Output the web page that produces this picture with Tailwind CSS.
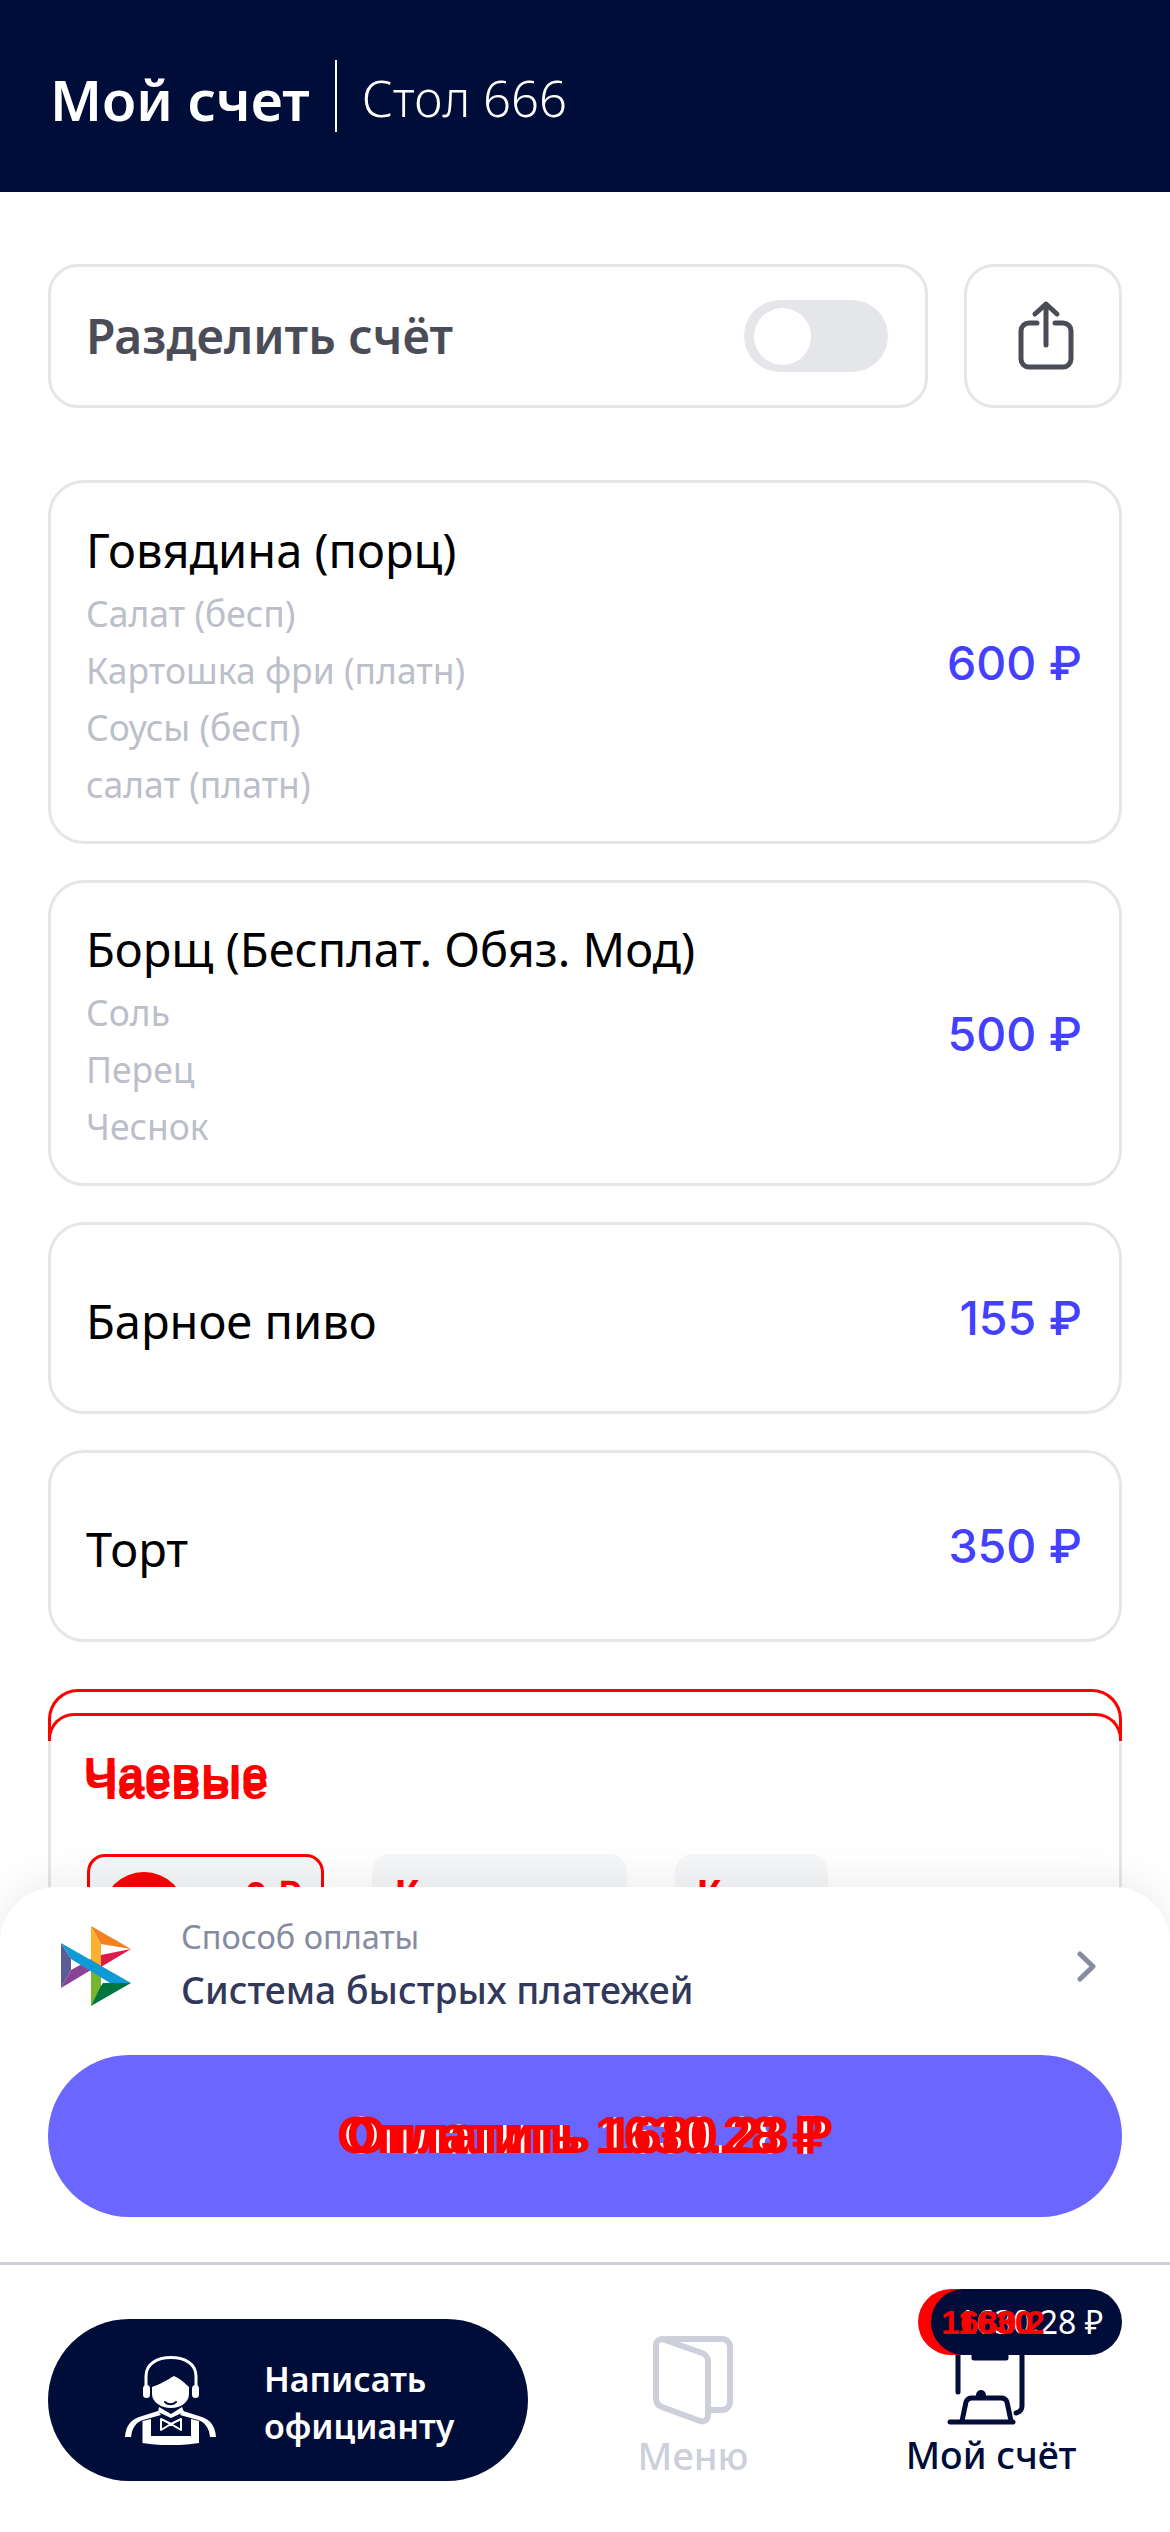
<!DOCTYPE html>
<html lang="ru">
<head>
  <meta charset="UTF-8" />
  <meta name="viewport" content="width=device-width, initial-scale=1" />
  <title>Мой счет</title>
  <script src="https://cdn.jsdelivr.net/npm/@tailwindcss/browser@4"></script>
</head>
<body class="bg-white font-['Noto_Sans',sans-serif]">
  <main class="relative w-[1170px] h-[2532px] overflow-hidden">
    <!-- Header -->
    <header class="h-[192px] bg-[#000d38] flex items-center pl-[50px] text-white">
      <h1 class="mt-[5px] text-[56px] font-semibold leading-none pr-[25px]">Мой счет</h1>
      <div class="w-[2px] h-[72px] bg-white"></div>
      <p class="mt-[5px] text-[49px] font-light leading-none pl-[25px]">Стол 666</p>
    </header>

    <div class="px-[48px] pt-[72px] flex flex-col">
      <!-- Split bill -->
      <div class="flex gap-[36px]">
        <div class="w-[880px] h-[144px] rounded-[30px] border-[3px] border-[#e5e6ea] flex items-center justify-between pl-[35px] pr-[37px]">
          <span class="text-[48px] font-semibold text-[#4a4c57]">Разделить счёт</span>
          <div class="w-[144px] h-[72px] rounded-full bg-[#e5e6ea] pl-[10px] flex items-center">
            <div class="w-[57px] h-[57px] rounded-full bg-white"></div>
          </div>
        </div>
        <div class="w-[158px] h-[144px] rounded-[30px] border-[3px] border-[#e5e6ea] flex items-center justify-center">
          <svg class="w-[60px] h-[72px] ml-[6px]" viewBox="0 0 60 72" fill="none" stroke="#4a4c57" stroke-width="5" stroke-linecap="round" stroke-linejoin="round">
            <path d="M21 23H13a8 8 0 0 0-8 8v28a8 8 0 0 0 8 8h34a8 8 0 0 0 8-8V31a8 8 0 0 0-8-8h-8" />
            <path d="M30 45V4M19 14 30 4l11 10" />
          </svg>
        </div>
      </div>

      <!-- Bill items -->
      <div class="mt-[72px] flex flex-col gap-[36px]">
        <div class="h-[364px] rounded-[36px] border-[3px] border-[#e5e6ea] flex items-center justify-between pl-[35px] pr-[37px]">
          <div class="pt-[3px]">
            <div class="text-[47px] leading-[70px] text-black">Говядина (порц)</div>
            <div class="text-[35.5px] leading-[57px] text-[#bcbfc9]">Салат (бесп)</div>
            <div class="text-[35.5px] leading-[57px] text-[#bcbfc9]">Картошка фри (платн)</div>
            <div class="text-[35.5px] leading-[57px] text-[#bcbfc9]">Соусы (бесп)</div>
            <div class="text-[35.5px] leading-[57px] text-[#bcbfc9]">салат (платн)</div>
          </div>
          <div class="pt-[3px] font-['Inter',sans-serif] text-[46.5px] font-medium text-[#4440ff]">600 ₽</div>
        </div>
        <div class="h-[306px] rounded-[36px] border-[3px] border-[#e5e6ea] flex items-center justify-between pl-[35px] pr-[37px]">
          <div class="pt-[3px]">
            <div class="text-[47px] leading-[70px] text-black">Борщ (Бесплат. Обяз. Мод)</div>
            <div class="text-[35.5px] leading-[57px] text-[#bcbfc9]">Соль</div>
            <div class="text-[35.5px] leading-[57px] text-[#bcbfc9]">Перец</div>
            <div class="text-[35.5px] leading-[57px] text-[#bcbfc9]">Чеснок</div>
          </div>
          <div class="pt-[3px] font-['Inter',sans-serif] text-[46.5px] font-medium text-[#4440ff]">500 ₽</div>
        </div>
        <div class="h-[192px] rounded-[36px] border-[3px] border-[#e5e6ea] flex items-center justify-between pl-[35px] pr-[37px]">
          <div class="pt-[6px] text-[47px] leading-[62px] text-black">Барное пиво</div>
          <div class="pt-[2px] font-['Inter',sans-serif] text-[46.5px] font-medium text-[#4440ff]">155 ₽</div>
        </div>
        <div class="h-[192px] rounded-[36px] border-[3px] border-[#e5e6ea] flex items-center justify-between pl-[35px] pr-[37px]">
          <div class="pt-[6px] text-[47px] leading-[62px] text-black">Торт</div>
          <div class="pt-[2px] font-['Inter',sans-serif] text-[46.5px] font-medium text-[#4440ff]">350 ₽</div>
        </div>
      </div>

      <!-- Tips, partly hidden by the bottom sheet -->
      <div class="relative mt-[46px] h-[400px] rounded-t-[36px] border-x-[3px] border-[#e5e6ea]">
        <div class="absolute -left-[3px] -right-[3px] top-[1px] h-[49px] rounded-t-[30px] border-[3px] border-b-0 border-[#ff0000]"></div>
        <div class="absolute -left-[3px] -right-[3px] top-[25px] h-[28px] rounded-t-[26px] border-[3px] border-b-0 border-[#ff0000]"></div>
        <div class="absolute left-[33px] top-[57px] text-[48px] font-bold leading-[60px] text-[#ff0000] font-['Liberation_Sans',sans-serif]">Чаевые</div>
        <div class="absolute left-[33px] top-[65px] text-[48px] font-bold leading-[60px] text-[#ff0000] font-['Liberation_Sans',sans-serif]">Чаевые</div>
        <div class="absolute left-[36px] top-[166px] flex gap-[48px]">
          <div class="w-[237px] h-[120px] rounded-[18px] bg-[#f5f6f8] border-[3px] border-[#ff0000] pl-[12px] pt-[15px] flex font-['Liberation_Sans',sans-serif]">
            <div class="w-[84px] h-[84px] rounded-full bg-[#ff0000]"></div>
            <span class="ml-[59px] mt-[1px] text-[40px] leading-[46px] font-bold text-[#ff0000]">0 ₽</span>
          </div>
          <div class="w-[255px] h-[120px] rounded-[18px] bg-[#f5f6f8] pl-[23px] pt-[17px] text-[40px] leading-[46px] font-bold text-[#ff0000] font-['Liberation_Sans',sans-serif]">К</div>
          <div class="w-[153px] h-[120px] rounded-[18px] bg-[#f5f6f8] pl-[22px] pt-[17px] text-[40px] leading-[46px] font-bold text-[#ff0000] font-['Liberation_Sans',sans-serif]">К</div>
        </div>
      </div>
    </div>

    <!-- Bottom sheet -->
    <section class="absolute left-0 right-0 top-[1887px] h-[375px] bg-white rounded-t-[56px] shadow-[0_-8px_40px_rgba(0,0,0,0.07)] px-[48px]">
      <div class="h-[168px] flex items-center pb-[10px]">
        <svg class="w-[71px] h-[80px] ml-[13px]" viewBox="0 0 71 80">
          <path d="M0 17 10 33V44L0 62Z" fill="#5b5b95" />
          <path d="M0 62 10 44 30 33 40 39 30 44Z" fill="#8a4295" />
          <path d="M30 0 40 18V40L30 34Z" fill="#fdb12a" />
          <path d="M30 0 70 23 40 18Z" fill="#f48120" />
          <path d="M70 23 40 29V41Z" fill="#dc1a4b" />
          <path d="M30 42 40 48V62L30 80Z" fill="#77b52d" />
          <path d="M30 80 40 60 42 57H70Z" fill="#00763f" />
          <path d="M0 17 70 57H49L10 33Z" fill="#0f9ad6" />
        </svg>
        <div class="ml-[49px] flex-1">
          <div class="text-[32.5px] leading-[48px] text-[#868b9f]">Способ оплаты</div>
          <div class="text-[37.3px] leading-[58px] font-medium text-[#32385a]">Система быстрых платежей</div>
        </div>
        <svg class="w-[19px] h-[31px] mr-[26px]" viewBox="0 0 19 31" fill="none" stroke="#868b9f" stroke-width="5" stroke-linecap="round" stroke-linejoin="round">
          <path d="M3 3 16 15.5 3 28" />
        </svg>
      </div>
      <div class="relative h-[162px] rounded-full bg-[#6a66ff] flex items-center justify-center text-[51px] font-bold whitespace-nowrap font-['Liberation_Sans',sans-serif]">
        <span class="absolute inset-0 flex items-center justify-center text-white">Оплатить 1630.28 ₽</span>
        <span class="absolute inset-0 flex items-center justify-center pr-[10px] text-[#ff0000]">Оплатить 1630.28 ₽</span>
        <span class="absolute inset-0 flex items-center justify-center pl-[10px] text-[#ff0000]">Оплатить 1680.23 ₽</span>
      </div>
    </section>

    <!-- Bottom nav -->
    <nav class="absolute left-0 right-0 top-[2262px] h-[270px] bg-white border-t-[3px] border-[#cdd0da]">
      <button class="absolute left-[48px] top-[54px] w-[480px] h-[162px] rounded-full bg-[#000d38] flex items-center text-white">
        <svg class="ml-[77px] w-[91px] h-[89px]" viewBox="0 0 91 89" fill="#fff">
          <path d="M21 32V20C21 8 32 1.5 46 1.5S71 8 71 20V32" fill="none" stroke="#fff" stroke-width="3" />
          <rect x="18" y="29" width="7" height="13" rx="3.5" />
          <rect x="67" y="29" width="7" height="13" rx="3.5" />
          <path d="M27 31C34 29 42 24 49 20 54 22 60 27 64 31V38C64 46 56 52 46 52S27 46 27 38Z" />
          <path d="M40 46C43 49 48 49 51 46" fill="none" stroke="#000d38" stroke-width="2" stroke-linecap="round" />
          <path d="M34 51 46 58 57 51 59 56 46 62 33 56Z" />
          <path d="M0 81C1 69 6 64 14 61L33 55 36 59 18 64C11 66 7 72 6 81Z" />
          <path d="M91 81C90 69 85 64 77 61L58 55 55 59 73 64C80 66 84 72 85 81Z" />
          <path d="M17.5 65 26 63V80H66V63L74 65V87C55 90 36 90 17.5 87Z" />
          <path d="M46 68 36 63V74ZM46 68 56 63V74Z" fill="none" stroke="#fff" stroke-width="2" stroke-linejoin="round" />
        </svg>
        <span class="ml-[48px] mt-[5px] text-left text-[34px] font-semibold leading-[47px]">Написать<br />официанту</span>
      </button>

      <div class="absolute left-[635px] top-[71px] w-[116px] flex flex-col items-center">
        <svg class="w-[80px] h-[89px]" viewBox="0 0 80 89" fill="none" stroke="#cdd0da" stroke-width="6" stroke-linejoin="round">
          <path d="M12 3h57a8 8 0 0 1 8 8v55a8 8 0 0 1-8 8H58" />
          <path d="M12 4 49 17a9 9 0 0 1 6 9v54a6 6 0 0 1-8 5L9 71a9 9 0 0 1-6-8V9a6 6 0 0 1 9-5Z" />
        </svg>
        <span class="mt-[7px] text-[38px] font-medium leading-[46px] text-[#cdd0da]">Меню</span>
      </div>

      <div class="absolute left-[905px] top-[63px] w-[172px] flex flex-col items-center">
        <svg class="w-[80px] h-[100px] mr-[12px]" viewBox="0 0 80 100" fill="none" stroke="#000d38" stroke-width="5" stroke-linecap="round" stroke-linejoin="round">
          <path d="M13 10V64M77 10V78c0 4-2 6-6 7" />
          <path d="M29 22H61V30H29Z" fill="#000d38" />
          <path d="M17 93 21 74C22 71 24 70 27 70H56C59 70 61 71 62 74L66 93" />
          <path d="M5 94H68" />
          <circle cx="36" cy="67" r="2.5" fill="#000d38" />
        </svg>
        <span class="mt-[4px] text-[37.5px] font-medium leading-[46px] text-[#000d38] whitespace-nowrap">Мой счёт</span>
      </div>

      <!-- Total badge over the bill tab -->
      <div class="absolute left-[918px] top-[24px] w-[60px] h-[66px] rounded-l-full bg-[#ff0000]"></div>
      <div class="absolute left-[931px] top-[24px] w-[191px] h-[66px] rounded-full bg-[#000d38]"></div>
      <span class="absolute left-[958px] top-[30px] text-[32px] leading-[54px] text-white whitespace-nowrap">1630.28 ₽</span>
      <span class="absolute left-[941px] top-[30px] text-[34px] font-bold leading-[54px] text-[#ff0000] font-['Liberation_Sans',sans-serif]">1680.2</span>
      <span class="absolute left-[958px] top-[30px] text-[34px] font-bold leading-[54px] text-[#ff0000] font-['Liberation_Sans',sans-serif]">1630</span>
    </nav>
  </main>
</body>
</html>
